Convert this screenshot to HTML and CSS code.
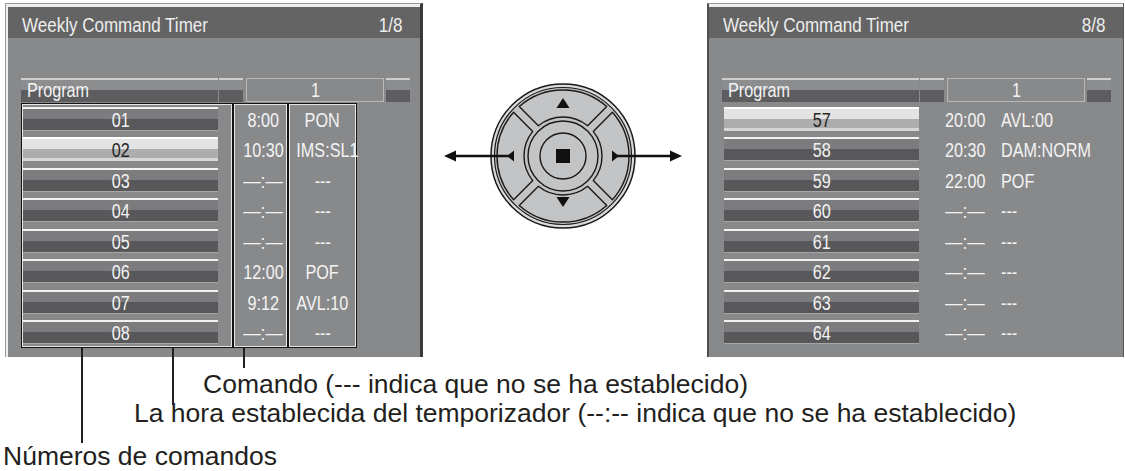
FILE: index.html
```html
<!DOCTYPE html>
<html lang="es">
<head>
<meta charset="utf-8">
<title>Weekly Command Timer</title>
<link rel="stylesheet" href="styles.css">
</head>
<body>
<div class="page">
  <div class="screens">
    <section class="panel panel-left">
      <div class="screen">
        <div class="titlebar"><span class="t tl">Weekly Command Timer</span><span class="t tr">1/8</span></div>
        <div class="program">
          <div class="pbar"><span class="t tl">Program</span></div>
          <div class="pseg pseg-a"></div>
          <div class="pbox"><span class="t">1</span></div>
          <div class="pseg pseg-b"></div>
        </div>
        <div class="list framed">
          <div class="col col-num">
            <div class="bar"><span class="t">01</span></div>
            <div class="bar selected"><span class="t">02</span></div>
            <div class="bar"><span class="t">03</span></div>
            <div class="bar"><span class="t">04</span></div>
            <div class="bar"><span class="t">05</span></div>
            <div class="bar"><span class="t">06</span></div>
            <div class="bar"><span class="t">07</span></div>
            <div class="bar"><span class="t">08</span></div>
          </div>
          <div class="col col-time">
            <div class="cell"><span class="t">8:00</span></div>
            <div class="cell"><span class="t">10:30</span></div>
            <div class="cell dash"><span class="t">—:—</span></div>
            <div class="cell dash"><span class="t">—:—</span></div>
            <div class="cell dash"><span class="t">—:—</span></div>
            <div class="cell"><span class="t">12:00</span></div>
            <div class="cell"><span class="t">9:12</span></div>
            <div class="cell dash"><span class="t">—:—</span></div>
          </div>
          <div class="col col-cmd">
            <div class="cell"><span class="t">PON</span></div>
            <div class="cell"><span class="t">IMS:SL1</span></div>
            <div class="cell"><span class="t">---</span></div>
            <div class="cell"><span class="t">---</span></div>
            <div class="cell"><span class="t">---</span></div>
            <div class="cell"><span class="t">POF</span></div>
            <div class="cell"><span class="t">AVL:10</span></div>
            <div class="cell"><span class="t">---</span></div>
          </div>
        </div>
      </div>
    </section>

    <div class="center">
      <svg class="dpad" width="245" height="150" viewBox="0 0 245 150" aria-hidden="true">
        <circle cx="123" cy="75" r="72" fill="#dadada" stroke="#1a1a1a" stroke-width="1.5"/>
        <circle cx="123" cy="75" r="68.5" fill="#c3c4c6" stroke="#1a1a1a" stroke-width="1.2"/>
        <g fill="#c3c4c6" stroke="#1a1a1a" stroke-width="1.4" stroke-linejoin="round">
          <path d="M79.25 25.59 A66 66 0 0 1 166.75 25.59 L147.6 44.74 A39 39 0 0 0 98.4 44.74 Z"/>
          <path d="M79.25 124.41 A66 66 0 0 0 166.75 124.41 L147.6 105.26 A39 39 0 0 1 98.4 105.26 Z"/>
          <path d="M73.59 31.25 A66 66 0 0 0 73.59 118.75 L92.74 99.6 A39 39 0 0 1 92.74 50.4 Z"/>
          <path d="M172.41 31.25 A66 66 0 0 1 172.41 118.75 L153.26 99.6 A39 39 0 0 0 153.26 50.4 Z"/>
          <circle cx="123" cy="75" r="35"/>
          <circle cx="123" cy="75" r="23"/>
        </g>
        <rect x="116" y="68" width="14" height="14" fill="#111"/>
        <polygon points="123,17 116.5,27 129.5,27" fill="#111"/>
        <polygon points="116.5,116 129.5,116 123,126" fill="#111"/>
        <polygon points="67,75 74,69.5 74,80.5" fill="#111"/>
        <polygon points="179,75 172,69.5 172,80.5" fill="#111"/>
        <line x1="12" y1="75" x2="72" y2="75" stroke="#111" stroke-width="2.4"/>
        <polygon points="4,75 16,69.5 16,80.5" fill="#111"/>
        <line x1="174" y1="75" x2="234" y2="75" stroke="#111" stroke-width="2.4"/>
        <polygon points="242,75 230,69.5 230,80.5" fill="#111"/>
      </svg>
    </div>

    <section class="panel panel-right">
      <div class="screen">
        <div class="titlebar"><span class="t tl">Weekly Command Timer</span><span class="t tr">8/8</span></div>
        <div class="program">
          <div class="pbar"><span class="t tl">Program</span></div>
          <div class="pseg pseg-a"></div>
          <div class="pbox"><span class="t">1</span></div>
          <div class="pseg pseg-b"></div>
        </div>
        <div class="list plain">
          <div class="col col-num">
            <div class="bar selected"><span class="t">57</span></div>
            <div class="bar"><span class="t">58</span></div>
            <div class="bar"><span class="t">59</span></div>
            <div class="bar"><span class="t">60</span></div>
            <div class="bar"><span class="t">61</span></div>
            <div class="bar"><span class="t">62</span></div>
            <div class="bar"><span class="t">63</span></div>
            <div class="bar"><span class="t">64</span></div>
          </div>
          <div class="col col-time">
            <div class="cell"><span class="t">20:00</span></div>
            <div class="cell"><span class="t">20:30</span></div>
            <div class="cell"><span class="t">22:00</span></div>
            <div class="cell dash"><span class="t">—:—</span></div>
            <div class="cell dash"><span class="t">—:—</span></div>
            <div class="cell dash"><span class="t">—:—</span></div>
            <div class="cell dash"><span class="t">—:—</span></div>
            <div class="cell dash"><span class="t">—:—</span></div>
          </div>
          <div class="col col-cmd">
            <div class="cell"><span class="t">AVL:00</span></div>
            <div class="cell"><span class="t">DAM:NORM</span></div>
            <div class="cell"><span class="t">POF</span></div>
            <div class="cell"><span class="t">---</span></div>
            <div class="cell"><span class="t">---</span></div>
            <div class="cell"><span class="t">---</span></div>
            <div class="cell"><span class="t">---</span></div>
            <div class="cell"><span class="t">---</span></div>
          </div>
        </div>
      </div>
    </section>
  </div>

  <div class="notes">
    <p class="note note-cmd">Comando (--- indica que no se ha establecido)</p>
    <p class="note note-time">La hora establecida del temporizador (--:-- indica que no se ha establecido)</p>
    <p class="note note-num">Números de comandos</p>
  </div>

  <span class="callout callout-num"></span>
  <span class="callout callout-time"></span>
  <span class="callout callout-cmd"></span>
</div>
</body>
</html>
```

FILE: styles.css
```css
html, body {
  margin: 0;
  padding: 0;
  background: #ffffff;
}

.page {
  position: relative;
  width: 1125px;
  height: 471px;
  overflow: hidden;
  font-family: "Liberation Sans", Arial, sans-serif;
}

.screens {
  display: flex;
  align-items: flex-start;
  padding: 3px 0 0 5px;
}

.panel {
  box-sizing: border-box;
  border-top: 1px solid #9a9a9a;
  padding-top: 3px;
  background: #eeeeee;
}

.panel-left {
  width: 418px;
  border-left: 1px solid #9a9a9a;
  border-right: 3px solid #3a3a3a;
  padding-left: 2px;
}

.panel-right {
  width: 417px;
  border-left: 2px solid #505050;
  border-right: 1px solid #555555;
}

.screen {
  height: 350px;
  background: #88898b;
  display: flex;
  flex-direction: column;
  font-family: "Liberation Sans", Arial, sans-serif;
  color: #f3f3f3;
}

/* the on-screen display font is a condensed sans */
.t {
  display: inline-block;
  transform: scaleX(0.83);
  transform-origin: center;
  white-space: nowrap;
}

.t.tl {
  transform-origin: left center;
}

.t.tr {
  transform-origin: right center;
}

.titlebar {
  box-sizing: border-box;
  height: 31px;
  background: #646464;
  display: flex;
  justify-content: space-between;
  align-items: center;
  padding: 4px 18px 0 14px;
  font-size: 20.5px;
  color: #eeeeee;
}

.program {
  display: flex;
  height: 24px;
  margin: 40px 0 0 13px;
}

.pbar,
.pseg {
  background: linear-gradient(to bottom, #cfcfcf 0 2px, #8c8d8f 2px 12px, #5d5d5f 12px 100%);
}

.pbar {
  width: 197px;
  display: flex;
  align-items: center;
  padding: 1px 0 0 6px;
  box-sizing: border-box;
  font-size: 19.5px;
}

.pseg {
  width: 24px;
}

.pseg-a {
  margin-left: 1px;
}

.pbox {
  box-sizing: border-box;
  width: 138px;
  margin-left: 3px;
  border: 1px solid #b8b8b8;
  display: flex;
  align-items: center;
  justify-content: center;
  padding-top: 1px;
  font-size: 19.5px;
}

.pseg-b {
  margin-left: 2px;
}

.list {
  box-sizing: border-box;
  display: flex;
  gap: 2px;
  padding: 1px;
  height: 245px;
  margin: 1px 0 0 13px;
}

.list.framed {
  background: #141414;
  align-self: flex-start;
}

.col {
  box-sizing: border-box;
  border: 1px solid #e6e6e6;
  background: #88898b;
  display: flex;
  flex-direction: column;
  justify-content: space-between;
  padding: 2px 0;
}

.list.plain .col {
  border-color: transparent;
}

.col-num {
  width: 210px;
}

.col-time {
  width: 53px;
}

.col-cmd {
  width: 67px;
}

.bar {
  width: 195px;
  height: 24px;
  line-height: 26px;
  text-align: center;
  font-size: 19.5px;
  color: #f3f3f3;
  background: linear-gradient(to bottom, #f2f2f2 0 2px, #7c7c7e 2px 12px, #58585a 12px 23px, #a6a6a6 23px 24px);
}

.bar.selected {
  color: #262626;
  background: linear-gradient(to bottom, #ffffff 0 2px, #e3e3e3 2px 12px, #adadad 12px 21px, #d6d6d6 21px 24px);
}

.cell {
  height: 24px;
  line-height: 26px;
  font-size: 19.5px;
  white-space: nowrap;
}

.cell.dash {
  font-size: 21px;
}

.framed .col-time .cell {
  text-align: right;
  padding-right: 7px;
}

.framed .col-time .t {
  transform-origin: right center;
}

.framed .col-cmd .cell {
  text-align: center;
}

.plain .col-time .cell {
  padding-left: 9px;
}

.plain .col-time .t,
.plain .col-cmd .t {
  transform-origin: left center;
}

.plain .col-cmd {
  width: 120px;
}

.plain .col-cmd .cell {
  padding-left: 10px;
}

.center {
  width: 284px;
  flex: none;
}

.dpad {
  display: block;
  margin: 78px 0 0 17px;
}

.notes {
  padding-top: 13px;
  color: #231f20;
  font-size: 26.5px;
}

.note {
  margin: 0;
  line-height: 29px;
  white-space: nowrap;
}

.note-cmd {
  padding-left: 203px;
}

.note-time {
  padding-left: 134px;
}

.note-num {
  padding-left: 3px;
  margin-top: 14px;
}

.callout {
  position: absolute;
  top: 347px;
  width: 2px;
  background: #231f20;
}

.callout-num {
  left: 81px;
  height: 96px;
}

.callout-time {
  left: 172px;
  height: 58px;
}

.callout-cmd {
  left: 243px;
  height: 21px;
}
```
